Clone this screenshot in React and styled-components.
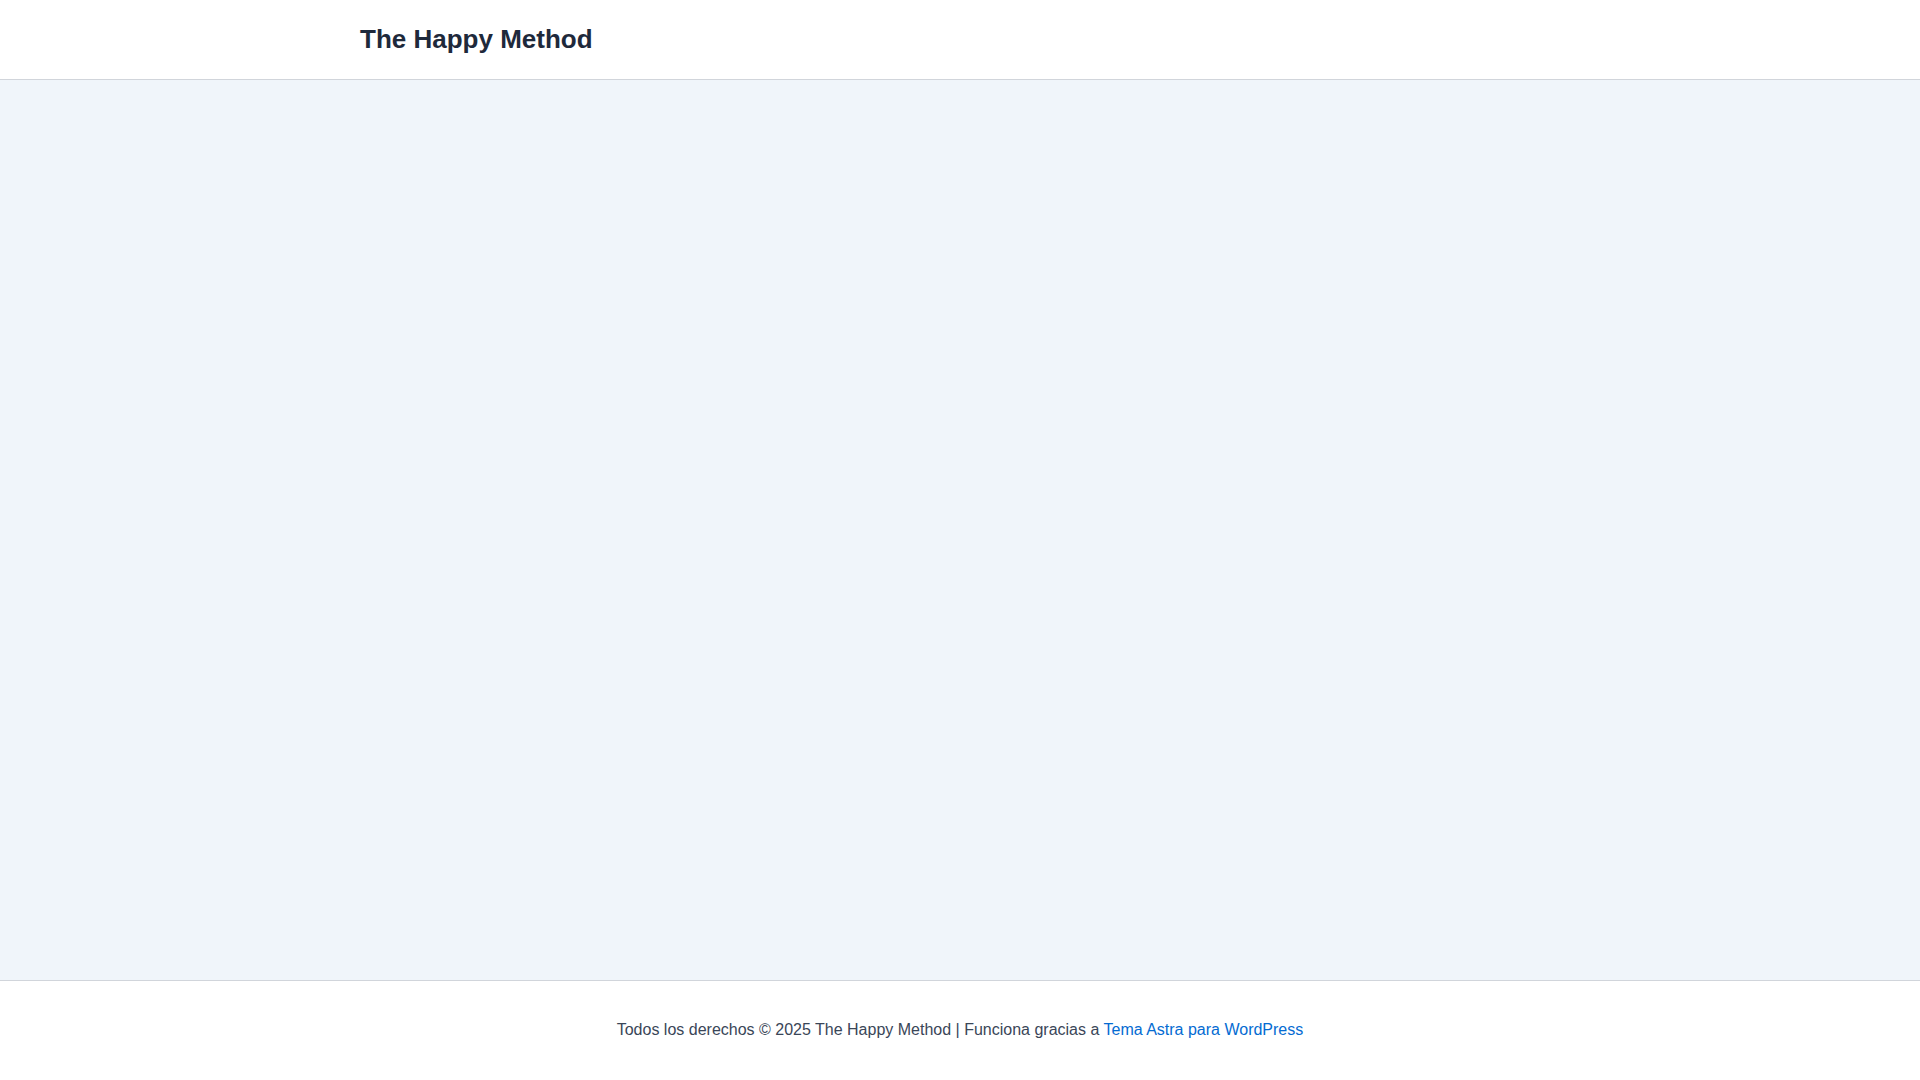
import React from "react";
import styled, { createGlobalStyle } from "styled-components";

const GlobalStyle = createGlobalStyle`
  html, body {
    margin: 0;
    padding: 0;
  }
  body {
    font-family: "Liberation Sans", Arial, sans-serif;
    color: #334155;
    background: #ffffff;
  }
`;

const Page = styled.div`
  display: flex;
  flex-direction: column;
  min-height: 1080px;
`;

const Header = styled.header`
  height: 79px;
  border-bottom: 1px solid #d1d5db;
  background: #ffffff;
  display: flex;
  align-items: center;
  padding: 0 360px;
`;

const SiteTitle = styled.a`
  font-size: 26px;
  font-weight: 700;
  color: #1e293b;
  text-decoration: none;
  line-height: 1;
  margin-bottom: 2px;
`;

const Main = styled.main`
  flex: 1;
  background: #f0f5fa;
`;

const Footer = styled.footer`
  border-top: 1px solid #d1d5db;
  background: #ffffff;
  height: 99px;
  display: flex;
  align-items: center;
  justify-content: center;
`;

const Copy = styled.div`
  font-size: 16px;
  line-height: 1.6;
  color: #3a4658;
  margin-top: -2px;
`;

const FooterLink = styled.a`
  color: #046bd2;
  text-decoration: none;
`;

export default function App() {
  return (
    <>
      <GlobalStyle />
      <Page>
        <Header>
          <SiteTitle href="#">The Happy Method</SiteTitle>
        </Header>
        <Main />
        <Footer>
          <Copy>
            Todos los derechos © 2025 The Happy Method | Funciona gracias a{" "}
            <FooterLink href="#">Tema Astra para WordPress</FooterLink>
          </Copy>
        </Footer>
      </Page>
    </>
  );
}
